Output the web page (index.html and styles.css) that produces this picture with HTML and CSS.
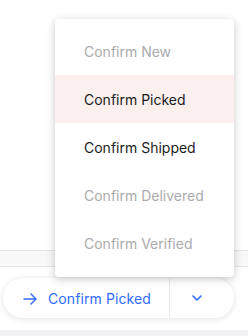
FILE: index.html
```html
<!DOCTYPE html>
<html>
<head>
<meta charset="utf-8">
<link rel="stylesheet" href="styles.css">
</head>
<body>
<div class="page">
  <div class="top"></div>
  <div class="band"></div>
  <div class="footer">
    <div class="split">
      <button class="main">
        <svg class="arrow" width="14" height="12" viewBox="0 0 14 12"><path d="M1 6H13M8 1L13 6L8 11" fill="none" stroke="currentColor" stroke-width="1.4" stroke-linecap="round" stroke-linejoin="round"/></svg>
        <span>Confirm Picked</span>
      </button>
      <button class="toggle">
        <svg width="10" height="6" viewBox="0 0 10 6"><path d="M1 1L5 5L9 1" fill="none" stroke="currentColor" stroke-width="1.6" stroke-linecap="round" stroke-linejoin="round"/></svg>
      </button>
    </div>
  </div>
  <div class="bottom"></div>
  <ul class="menu">
    <li class="item disabled">Confirm New</li>
    <li class="item active">Confirm Picked</li>
    <li class="item">Confirm Shipped</li>
    <li class="item disabled">Confirm Delivered</li>
    <li class="item disabled">Confirm Verified</li>
  </ul>
</div>
</body>
</html>
```

FILE: styles.css
```css
* { box-sizing: border-box; }
html, body { margin: 0; padding: 0; background: #fff; }
body { font-family: Inter, "Noto Sans", sans-serif; font-size: 14px; }
.page { position: relative; width: 248px; height: 336px; overflow: hidden; }
.top { height: 250px; background: #fff; }
.band { height: 17px; background: #f8f8f9; border-top: 1px solid #e6e6e8; border-bottom: 1px solid #e6e6e8; }
.footer { height: 63px; background: #fff; padding: 11px 0 0 3px; }
.bottom { height: 6px; background: #f2f2f4; }
.split { display: flex; width: 231px; height: 40px; border-radius: 20px; background: #fff; box-shadow: 0 1px 6px rgba(0,0,0,0.12); }
.split button { border: 0; background: transparent; color: #2f6bff; font: inherit; display: flex; align-items: center; padding: 0; cursor: pointer; }
.main { width: 167px; padding-left: 20px !important; gap: 11px; border-right: 1px solid #e8e8ea !important; }
.main span { letter-spacing: 0.1px; }
.toggle { flex: 1; justify-content: center; padding-right: 10px !important; }
.arrow { margin-top: 1px; }
.menu { position: absolute; left: 55px; top: 19px; width: 179px; margin: 0; padding: 8px 0 10px; list-style: none; background: #fff; border-radius: 4px; box-shadow: 0 2px 8px rgba(0,0,0,0.22); }
.item { height: 48px; line-height: 48px; padding: 1px 0 0 29px; color: #1c1c1e; }
.item.disabled { color: #ababad; }
.item.active { background: #fbf0ee; }
```
